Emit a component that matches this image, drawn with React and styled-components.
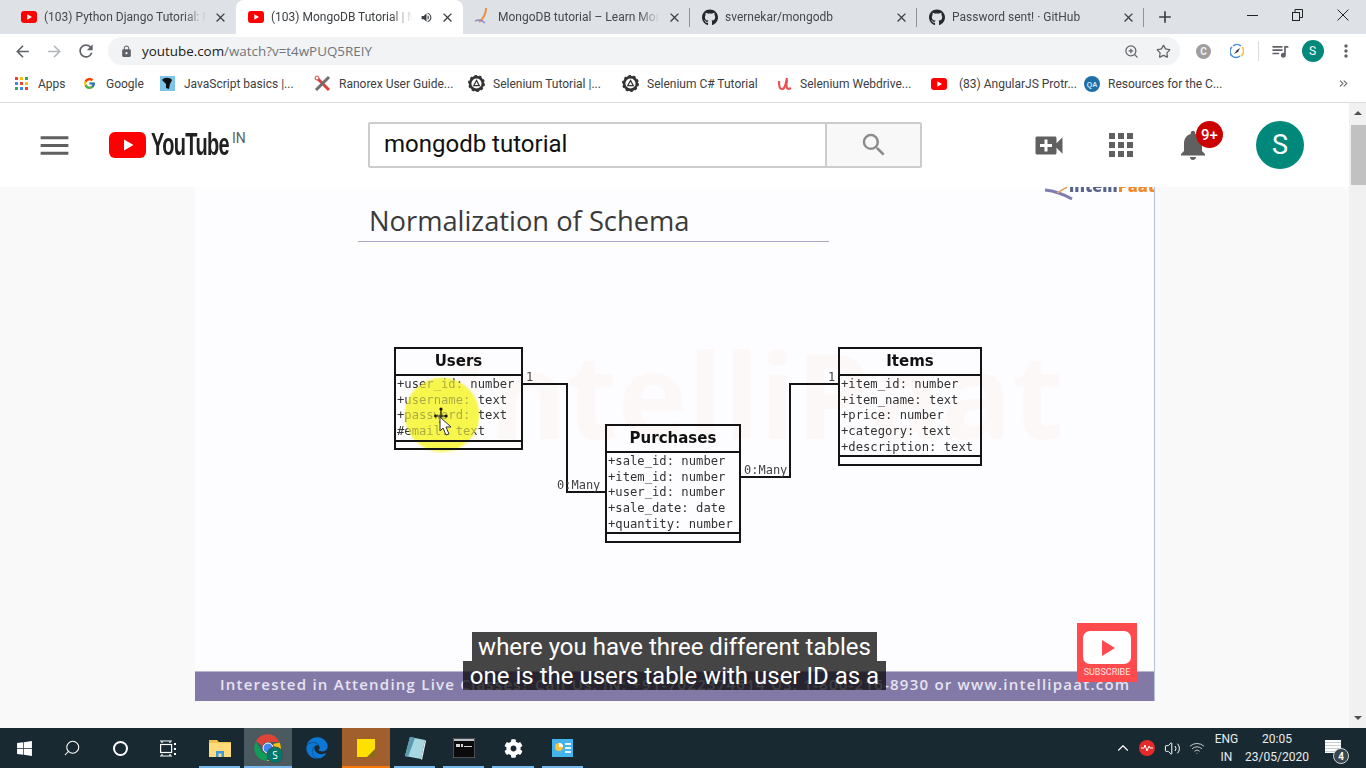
import styled, { createGlobalStyle } from "styled-components";
import { FaGithub, FaWindows, FaCog, FaEdge } from "react-icons/fa";
import { FcGoogle } from "react-icons/fc";
import {
  MdMenu,
  MdVideoCall,
  MdApps,
  MdNotifications,
  MdSearch,
  MdArrowBack,
  MdArrowForward,
  MdRefresh,
  MdLock,
  MdClose,
  MdAdd,
  MdQueueMusic,
  MdMoreVert,
  MdVolumeUp,
} from "react-icons/md";
import { Search, Star, ZoomIn, Volume2, Wifi, ChevronsRight, ChevronUp } from "lucide-react";

const GlobalStyle = createGlobalStyle`
  html, body { margin: 0; padding: 0; overflow: hidden; }
  * { box-sizing: border-box; }
  body { font-family: Roboto, "Open Sans", sans-serif; }
`;

const Screen = styled.div`
  width: 1366px;
  height: 768px;
  display: flex;
  flex-direction: column;
  overflow: hidden;
  background: #fff;
`;

/* ---------- browser chrome ---------- */
const TabStrip = styled.div`
  height: 34px;
  background: #dee1e6;
  display: flex;
  padding-left: 9px;
  flex-shrink: 0;
`;

const Tab = styled.div`
  width: 227px;
  height: 34px;
  display: flex;
  align-items: center;
  padding-left: 12px;
  gap: 7px;
  position: relative;
  border-radius: 8px 8px 0 0;
  background: ${(p) => (p.$active ? "#fff" : "transparent")};
  color: ${(p) => (p.$active ? "#3c4043" : "#45484c")};
  &::after {
    content: "";
    display: ${(p) => (p.$sep ? "block" : "none")};
    position: absolute;
    right: 0;
    top: 8px;
    height: 19px;
    width: 1px;
    background: #8f9296;
  }
`;

const TabIcon = styled.span`
  width: 16px;
  height: 16px;
  display: flex;
  align-items: center;
  justify-content: center;
  flex-shrink: 0;
`;

const TabTitle = styled.span`
  flex: 1;
  min-width: 0;
  font-size: 12px;
  line-height: 16px;
  white-space: nowrap;
  overflow: hidden;
  mask-image: linear-gradient(to right, #000 calc(100% - 22px), transparent);
`;

const TabClose = styled(MdClose)`
  width: 15px;
  height: 15px;
  color: #3c4043;
  margin-right: 8px;
  flex-shrink: 0;
`;

const Speaker = styled(MdVolumeUp)`
  width: 13px;
  height: 13px;
  color: #3c4043;
  flex-shrink: 0;
`;

const NewTab = styled(MdAdd)`
  width: 20px;
  height: 20px;
  color: #3c4043;
  margin: 7px 0 0 11px;
`;

const WindowButtons = styled.div`
  margin-left: auto;
  display: flex;
  align-items: flex-start;
  padding-right: 1px;
`;

const WindowButton = styled.div`
  width: 45px;
  height: 30px;
  display: flex;
  align-items: center;
  justify-content: center;
  color: #222;
`;

const Toolbar = styled.div`
  height: 34px;
  display: flex;
  align-items: center;
  background: #fff;
  padding-left: 12px;
  flex-shrink: 0;
`;

const NavButton = styled.span`
  width: 32px;
  display: flex;
  justify-content: center;
  color: ${(p) => p.$color || "#5f6368"};
  margin-left: ${(p) => (p.$first ? "-6px" : "0")};
`;

const Omnibox = styled.div`
  width: 1072px;
  height: 28px;
  margin-left: 6px;
  border-radius: 14px;
  background: #f1f3f4;
  display: flex;
  align-items: center;
  padding: 0 1px 0 12px;
  color: #5f6368;
`;

const Url = styled.span`
  font-family: "Open Sans", sans-serif;
  font-size: 13.4px;
  margin-left: 9px;
  color: #70757a;
  flex: 1;
  b {
    font-weight: 400;
    color: #202124;
  }
`;

const OmniIcon = styled.span`
  display: flex;
  width: 32px;
  justify-content: center;
  color: #5f6368;
`;

const ExtArea = styled.div`
  flex: 1;
  display: flex;
  align-items: center;
  padding-left: 7px;
`;

const ExtButton = styled.span`
  width: ${(p) => p.$w || 33}px;
  display: flex;
  justify-content: center;
  align-items: center;
  color: #5f6368;
`;

const GreyCircle = styled.span`
  width: 15px;
  height: 15px;
  border-radius: 50%;
  background: #9e9e9e;
  color: #eee;
  font-size: 10px;
  font-weight: 700;
  display: flex;
  align-items: center;
  justify-content: center;
`;

const ToolbarSep = styled.span`
  width: 1px;
  height: 20px;
  background: #dadce0;
  margin: 0 4px 0 5px;
`;

const SmallAvatar = styled.span`
  width: 22px;
  height: 22px;
  border-radius: 50%;
  background: #00897b;
  color: #fff;
  font-size: 12px;
  display: flex;
  align-items: center;
  justify-content: center;
`;

const Bookmarks = styled.div`
  height: 35px;
  display: flex;
  align-items: flex-start;
  padding: 7px 0 0 15px;
  background: #fff;
  border-bottom: 1px solid #dcdcdc;
  flex-shrink: 0;
`;

const Bookmark = styled.div`
  width: ${(p) => p.$w}px;
  display: flex;
  align-items: center;
  gap: ${(p) => p.$gap || 8}px;
  height: 17px;
  font-size: 12px;
  color: #3c4043;
  white-space: nowrap;
  flex-shrink: 0;
`;

const BookmarkMore = styled(ChevronsRight)`
  width: 13px;
  height: 13px;
  color: #6b6f73;
  margin: 2px 16px 0 auto;
`;

/* ---------- page ---------- */
const Viewport = styled.div`
  flex: 1;
  display: flex;
  min-height: 0;
`;

const Page = styled.div`
  flex: 1;
  display: flex;
  flex-direction: column;
  background: #f9f9f9;
`;

const Masthead = styled.header`
  height: 84px;
  background: #fff;
  display: flex;
  align-items: center;
  padding: 0 45px 0 36px;
  position: relative;
  z-index: 5;
  flex-shrink: 0;
`;

const LogoGroup = styled.div`
  width: 332px;
  display: flex;
  align-items: center;
`;

const MenuIcon = styled(MdMenu)`
  width: 37px;
  height: 37px;
  color: #606060;
  margin-right: 36px;
`;

const Wordmark = styled.span`
  display: inline-block;
  width: 77px;
  margin-left: 5px;
  font-family: "Liberation Sans", sans-serif;
  font-weight: 700;
  font-size: 31px;
  letter-spacing: -1px;
  color: #212121;
  transform: scaleX(0.645);
  transform-origin: left center;
  white-space: nowrap;
`;

const Region = styled.span`
  font-size: 14px;
  color: #606060;
  margin: -14px 0 0 4px;
  line-height: 1;
`;

const SearchBox = styled.div`
  width: 554px;
  height: 46px;
  display: flex;
  border: 2px solid #ccc;
  border-radius: 2px;
`;

const SearchInput = styled.div`
  flex: 1;
  padding-left: 14px;
  font-size: 24px;
  line-height: 41px;
  color: #111;
  background: #fff;
`;

const SearchButton = styled.div`
  width: 95px;
  background: #f8f8f8;
  border-left: 2px solid #ccc;
  display: flex;
  align-items: center;
  justify-content: center;
  color: #8c8c8c;
`;

const Actions = styled.div`
  margin-left: auto;
  display: flex;
  align-items: center;
`;

const ActionIcon = styled.span`
  width: 36px;
  height: 36px;
  margin-right: 36px;
  display: flex;
  align-items: center;
  justify-content: center;
  color: #606060;
  position: relative;
  &:nth-child(3) {
    margin-right: 45px;
  }
`;

const Badge = styled.span`
  position: absolute;
  left: 21px;
  top: -6px;
  width: 27px;
  height: 27px;
  border-radius: 50%;
  background: #cc0000;
  color: #fff;
  font-size: 15px;
  font-weight: 500;
  display: flex;
  align-items: center;
  justify-content: center;
`;

const Avatar = styled.span`
  width: 48px;
  height: 48px;
  border-radius: 50%;
  background: #00897b;
  color: #fff;
  font-size: 27px;
  display: flex;
  align-items: center;
  justify-content: center;
`;

const Main = styled.main`
  flex: 1;
  padding-left: 195px;
`;

const Video = styled.div`
  width: 960px;
  height: 514px;
  position: relative;
  overflow: hidden;
  background: #fdfcfe;
  border-right: 1px solid #b9bedb;
`;

const VendorLogo = styled.div`
  position: absolute;
  left: 874px;
  top: -11px;
  font-family: "Open Sans", sans-serif;
  font-size: 16px;
  line-height: 20px;
  font-weight: 800;
  color: #5a6488;
  filter: blur(0.5px);
  white-space: nowrap;
  span {
    color: #f08a2c;
  }
`;

const Swoosh = styled.svg`
  position: absolute;
  left: 850px;
  top: 0;
  filter: blur(0.6px);
`;

const Watermark = styled.div`
  position: absolute;
  left: 255px;
  top: 142px;
  font-family: "Open Sans", sans-serif;
  font-size: 118px;
  line-height: 130px;
  font-weight: 700;
  color: #f3a15e;
  opacity: 0.03;
  white-space: nowrap;
`;

const SlideTitle = styled.h1`
  position: absolute;
  left: 174px;
  top: 14px;
  margin: 0;
  font-family: "Open Sans", sans-serif;
  font-size: 27.3px;
  line-height: 40px;
  font-weight: 400;
  color: #3a3a3a;
  white-space: nowrap;
`;

const TitleRule = styled.div`
  position: absolute;
  left: 163px;
  top: 54px;
  width: 471px;
  height: 1px;
  background: #aba6cb;
`;

const Wires = styled.svg`
  position: absolute;
  left: 0;
  top: 0;
  filter: blur(0.3px);
`;

const Highlight = styled.div`
  position: absolute;
  left: 210px;
  top: 191px;
  width: 74px;
  height: 74px;
  border-radius: 50%;
  background: #f7f64e;
  filter: blur(1px);
`;

const UmlBox = styled.div`
  position: absolute;
  left: ${(p) => p.$x}px;
  top: ${(p) => p.$y}px;
  width: ${(p) => p.$w}px;
  border: 2px solid #141414;
  filter: blur(0.35px);
`;

const UmlTitle = styled.div`
  height: 25px;
  font-family: "DejaVu Sans", sans-serif;
  font-weight: 700;
  font-size: 15px;
  line-height: 24px;
  text-align: center;
  color: #111;
`;

const UmlBody = styled.div`
  border-top: 2px solid #141414;
  border-bottom: 2px solid #141414;
  padding: 1px 0 0 1px;
  position: relative;
  overflow: hidden;
`;

const UmlRow = styled.div`
  font-family: "DejaVu Sans Mono", monospace;
  font-size: 12.2px;
  line-height: 15.7px;
  height: 15.7px;
  color: #333;
  white-space: nowrap;
`;

const UmlFoot = styled.div`
  height: 6.5px;
`;

const Wash = styled.div`
  position: absolute;
  left: 9px;
  top: 2px;
  width: 74px;
  height: 74px;
  border-radius: 50%;
  background: rgba(247, 246, 78, 0.62);
`;

const WireLabel = styled.span`
  position: absolute;
  left: ${(p) => p.$x}px;
  top: ${(p) => p.$y}px;
  font-family: "DejaVu Sans Mono", monospace;
  font-size: 12px;
  line-height: 14px;
  color: #444;
  filter: blur(0.3px);
`;

const Pointer = styled.svg`
  position: absolute;
  left: 239px;
  top: 220px;
`;

const PurpleBar = styled.div`
  position: absolute;
  left: 0;
  bottom: 0;
  width: 100%;
  height: 30px;
  background: #8279a7;
  border-top: 1px solid #b9b5d2;
  padding-left: 25px;
  font-family: "Open Sans", sans-serif;
  font-weight: 600;
  font-size: 15px;
  line-height: 25px;
  letter-spacing: 1.23px;
  color: #e6e4f0;
  white-space: nowrap;
`;

const Captions = styled.div`
  position: absolute;
  left: 0;
  top: 445px;
  width: 100%;
  display: flex;
  flex-direction: column;
  align-items: center;
`;

const CaptionLine = styled.div`
  height: 29px;
  padding: 1px 6.5px 0;
  background: rgba(8, 8, 8, 0.75);
  color: #fff;
  font-size: 24px;
  line-height: 29px;
  white-space: nowrap;
`;

const SubscribeBadge = styled.div`
  position: absolute;
  left: 882px;
  top: 436px;
  width: 60px;
  height: 59px;
  background: #ff4a4e;
  padding-top: 8px;
  display: flex;
  flex-direction: column;
  align-items: center;
  color: #ffe3e3;
  font-size: 9px;
  line-height: 11px;
`;

const SubscribeIcon = styled.div`
  width: 48px;
  height: 33px;
  border-radius: 7px;
  background: #fff;
  margin-bottom: 3px;
  display: flex;
  align-items: center;
  justify-content: center;
  &::before {
    content: "";
    border-left: 13px solid #ff4a4e;
    border-top: 8px solid transparent;
    border-bottom: 8px solid transparent;
    margin-left: 3px;
  }
`;

const Scrollbar = styled.div`
  width: 17px;
  background: #f1f1f1;
  display: flex;
  flex-direction: column;
  align-items: center;
  position: relative;
  z-index: 6;
`;

const ScrollArrow = styled.span`
  height: 20px;
  display: flex;
  align-items: center;
  justify-content: center;
  margin-top: ${(p) => (p.$down ? "auto" : "0")};
  &::before {
    content: "";
    border-left: 4px solid transparent;
    border-right: 4px solid transparent;
    border-${(p) => (p.$down ? "top" : "bottom")}: 4px solid #505050;
  }
`;

const ScrollThumb = styled.div`
  width: 15px;
  height: 60px;
  margin-top: 2px;
  margin-left: 1px;
  background: #c1c1c1;
`;

/* ---------- taskbar ---------- */
const Taskbar = styled.footer`
  height: 40px;
  background: #192931;
  display: flex;
  color: #fff;
  flex-shrink: 0;
`;

const TaskSlot = styled.div`
  width: ${(p) => p.$w || 48}px;
  height: 40px;
  display: flex;
  align-items: center;
  justify-content: center;
  position: relative;
  background: ${(p) => p.$bg || "transparent"};
  &::after {
    content: "";
    display: ${(p) => (p.$line ? "block" : "none")};
    position: absolute;
    left: ${(p) => (p.$bg ? 0 : 4)}px;
    right: ${(p) => (p.$bg ? 0 : 4)}px;
    bottom: 0;
    height: 2px;
    background: ${(p) => p.$line};
  }
`;

const TaskGap = styled.div`
  width: 3px;
`;

const SearchGlyph = styled(Search)`
  width: 18px;
  height: 18px;
  stroke-width: 1.4;
  transform: scaleX(-1);
`;

const CortanaRing = styled.span`
  width: 15px;
  height: 15px;
  border: 2.5px solid #fff;
  border-radius: 50%;
`;

const Tray = styled.div`
  margin-left: auto;
  display: flex;
  padding-right: 10px;
`;

const TrayText = styled.div`
  width: ${(p) => p.$w}px;
  height: 40px;
  display: flex;
  flex-direction: column;
  align-items: center;
  justify-content: center;
  font-size: 12px;
  line-height: 18px;
  color: #e8ecee;
`;

const Pulse = styled.span`
  width: 16px;
  height: 16px;
  border-radius: 50%;
  background: #e52a2a;
  display: flex;
  align-items: center;
  justify-content: center;
`;

const NoteBubble = styled.div`
  width: 16px;
  height: 13px;
  margin-top: -3px;
  background: repeating-linear-gradient(#fff 0 2px, #c9ced1 2px 3px);
  position: relative;
`;

const NoteCount = styled.span`
  position: absolute;
  left: 8px;
  top: 8px;
  width: 16px;
  height: 16px;
  border-radius: 50%;
  background: #3a474e;
  border: 1.5px solid #d0d4d6;
  color: #fff;
  font-size: 10px;
  font-weight: 700;
  display: flex;
  align-items: center;
  justify-content: center;
`;

const YtFavicon = () => (
  <svg width="16" height="12" viewBox="0 0 16 12">
    <rect width="16" height="12" rx="3" fill="#f00" />
    <path d="M6.3 3.2v5.6L11 6z" fill="#fff" />
  </svg>
);

const Feather = () => (
  <svg width="16" height="18" viewBox="0 0 16 18" fill="none">
    <path d="M11 0 C11 6 8 11 4 14" stroke="#ef8f3b" strokeWidth="2" />
    <path d="M0 13 C4 11 7 12 10 15" stroke="#8f86c8" strokeWidth="1.4" />
  </svg>
);

const RanorexIcon = () => (
  <svg width="17" height="17" viewBox="0 0 17 17" fill="none">
    <path d="M2 2l13 13" stroke="#d8433c" strokeWidth="3" />
    <path d="M15 2L2 15" stroke="#6f6f6f" strokeWidth="3" />
    <circle cx="3" cy="3" r="2" fill="#fff" stroke="#d8433c" />
  </svg>
);

const JsIcon = () => (
  <svg width="15" height="15" viewBox="0 0 15 15">
    <rect width="15" height="15" fill="#7cc5ea" />
    <path d="M2 4c2-3 8-3 10 0l-2 4-1 5-3-1V8z" fill="#111" />
  </svg>
);

const SeleniumIcon = () => (
  <svg width="17" height="17" viewBox="0 0 17 17">
    <circle cx="8.5" cy="8.5" r="6.4" fill="none" stroke="#333" strokeWidth="2.6" />
    <circle cx="8.5" cy="8.5" r="7.6" fill="none" stroke="#333" strokeWidth="1.8" strokeDasharray="2.4 2.4" />
    <path d="M8.5 5.4l2.8 5.2H5.7z" fill="none" stroke="#333" strokeWidth="1.2" />
  </svg>
);

const UdemyIcon = () => (
  <svg width="15" height="15" viewBox="0 0 15 15" fill="none" stroke="#ea5252" strokeWidth="2.2">
    <path d="M2 5c0 7 1 8 3 8 3 0 4-6 5-11" />
    <path d="M10 4c-1 5-1 9 2 9l2-1" />
  </svg>
);

const QaIcon = () => (
  <svg width="16" height="16" viewBox="0 0 16 16">
    <circle cx="8" cy="8" r="8" fill="#1d6fa5" />
    <text x="8" y="10.5" fontSize="7" fontFamily="Liberation Sans" fontWeight="700" fill="#cfe8f7" textAnchor="middle">
      QA
    </text>
  </svg>
);

const CompassIcon = () => (
  <svg width="14" height="16" viewBox="0 0 14 16" fill="none">
    <path d="M3 3a6 6 0 0 1 8 0" stroke="#4a90e2" strokeWidth="1.6" />
    <path d="M12 4a6 6 0 0 1-1 9" stroke="#f4c430" strokeWidth="1.6" />
    <path d="M10 13a6 6 0 0 1-8-9" stroke="#4a90e2" strokeWidth="1.6" />
    <path d="M4 11l3-4 3-2-2 4z" fill="#30343a" />
  </svg>
);

const ChromeIcon = () => (
  <svg width="30" height="30" viewBox="0 0 30 30">
    <path d="M3 8a13 13 0 0 1 23.3 1H15a6 6 0 0 0-5.6 4z" fill="#db4437" />
    <path d="M26.6 9.5A13 13 0 0 1 14 28l5.5-9a6 6 0 0 0 .6-8z" fill="#f4c20d" />
    <path d="M13.5 28A13 13 0 0 1 3 8.5l5.6 9.5a6 6 0 0 0 6 2.8z" fill="#0f9d58" />
    <circle cx="15" cy="15" r="5" fill="#4285f4" stroke="#fff" strokeWidth="1" />
    <circle cx="22" cy="22" r="8" fill="#00796b" stroke="#3d5157" strokeWidth="1" />
    <text x="22" y="26" fontSize="10" fontFamily="Open Sans" fill="#fff" textAnchor="middle">
      S
    </text>
  </svg>
);

const FolderIcon = () => (
  <svg width="22" height="18" viewBox="0 0 22 18">
    <path d="M0 1h8l2 2h12v15H0z" fill="#f4c04e" />
    <path d="M0 4h22v14H0z" fill="#ffdb7a" />
    <path d="M7 18v-6h8v6h-2.5v-3.500h-3V18z" fill="#3d9ae0" />
  </svg>
);

const StickyIcon = () => (
  <svg width="18" height="18" viewBox="0 0 18 18">
    <path d="M0 0h18v11l-7 7H0z" fill="#ffe100" />
    <path d="M18 10v8H10z" fill="#8a6a18" />
  </svg>
);

const NotepadIcon = () => (
  <svg width="22" height="24" viewBox="0 0 22 24">
    <path d="M6 1l15 3-4 19-16-3z" fill="#a7d7e3" />
    <path d="M6 1l5 1-7 19-3-1z" fill="#5c9bad" />
    <path d="M17 23l4-19 1 1-4 19z" fill="#eef7f9" />
  </svg>
);

const CmdIcon = () => (
  <svg width="22" height="20" viewBox="0 0 22 20">
    <rect width="22" height="20" fill="#0b0b0b" stroke="#8a8f92" />
    <rect x="1" y="1" width="20" height="2" fill="#b9bfc2" />
    <path d="M3 6h4v3H3zM8 6h2v3H8zM11 8h8v1h-8z" fill="#d4d4d4" />
  </svg>
);

const ControlIcon = () => (
  <svg width="21" height="18" viewBox="0 0 21 18">
    <rect width="21" height="18" fill="#45b3ec" />
    <circle cx="7" cy="8" r="4" fill="#f6c344" />
    <path d="M7 8V4a4 4 0 0 1 4 4z" fill="#fff" />
    <path d="M13 4h6v2h-6zM13 8h6v2h-6zM13 12h6v2h-6z" fill="#e4f4fc" />
  </svg>
);

const TaskViewIcon = () => (
  <svg width="16" height="17" viewBox="0 0 16 17" fill="none" stroke="#fff" strokeWidth="1.2">
    <path d="M0 1h12M2 1v2M10 1v2M0 16h12M2 14v2M10 14v2" />
    <rect x="0.600" y="4.500" width="11" height="8" />
    <path d="M15 3v2M15 8v2M15 13v2" strokeWidth="2" />
  </svg>
);

const MoveCursor = () => (
  <Pointer width="24" height="34" viewBox="0 0 24 34">
    <path d="M7 9v-7M7 9v6M3 9h8" stroke="#111" strokeWidth="1.2" />
    <circle cx="7" cy="2" r="1.6" fill="#111" />
    <circle cx="7" cy="15" r="1.6" fill="#111" />
    <circle cx="1.500" cy="9" r="1.4" fill="#111" />
    <circle cx="12" cy="9" r="1.6" fill="#111" />
    <path d="M6 10l0 14 3-3 3 7 3-1-3-7h5z" fill="#fff" stroke="#333" strokeWidth="1" />
  </Pointer>
);

function AppsColored() {
  const colors = ["#ea4335", "#fbbc05", "#34a853", "#4285f4", "#ea4335", "#fbbc05", "#34a853", "#4285f4", "#ea4335"];
  return (
    <svg width="13" height="13" viewBox="0 0 13 13">
      {colors.map((c, i) => (
        <rect key={i} x={(i % 3) * 5} y={Math.floor(i / 3) * 5} width="3" height="3" fill={c} />
      ))}
    </svg>
  );
}

const tabs = [
  { icon: <YtFavicon />, title: "(103) Python Django Tutorial: Full Course" },
  { icon: <YtFavicon />, title: "(103) MongoDB Tutorial | MongoDB", active: true, sound: true },
  { icon: <Feather />, title: "MongoDB tutorial – Learn MongoDB", sep: true },
  { icon: <FaGithub size={17} color="#24292e" />, title: "svernekar/mongodb", sep: true },
  { icon: <FaGithub size={17} color="#24292e" />, title: "Password sent! · GitHub", sep: true },
];

const bookmarks = [
  { w: 68, gap: 10, icon: <AppsColored />, label: "Apps" },
  { w: 77, gap: 10, icon: <FcGoogle size={13} />, label: "Google" },
  { w: 154, gap: 9, icon: <JsIcon />, label: "JavaScript basics |..." },
  { w: 154, icon: <RanorexIcon />, label: "Ranorex User Guide..." },
  { w: 154, icon: <SeleniumIcon />, label: "Selenium Tutorial |..." },
  { w: 155, icon: <SeleniumIcon />, label: "Selenium C# Tutorial" },
  { w: 154, icon: <UdemyIcon />, label: "Selenium Webdrive..." },
  { w: 153, gap: 12, icon: <YtFavicon />, label: "(83) AngularJS Protr..." },
  { w: 200, icon: <QaIcon />, label: "Resources for the C..." },
];

const users = ["+user_id: number", "+username: text", "+password: text", "#email: text"];
const purchases = ["+sale_id: number", "+item_id: number", "+user_id: number", "+sale_date: date", "+quantity: number"];
const items = ["+item_id: number", "+item_name: text", "+price: number", "+category: text", "+description: text"];

function Uml({ x, y, w, title, rows, wash }) {
  return (
    <UmlBox $x={x} $y={y} $w={w}>
      <UmlTitle>{title}</UmlTitle>
      <UmlBody>
        {rows.map((r) => (
          <UmlRow key={r}>{r}</UmlRow>
        ))}
        {wash && <Wash />}
      </UmlBody>
      <UmlFoot />
    </UmlBox>
  );
}

export default function App() {
  return (
    <Screen>
      <GlobalStyle />
      <TabStrip>
        {tabs.map((t) => (
          <Tab key={t.title} $active={t.active} $sep={t.sep}>
            <TabIcon>{t.icon}</TabIcon>
            <TabTitle>{t.title}</TabTitle>
            {t.sound && <Speaker />}
            <TabClose />
          </Tab>
        ))}
        <NewTab />
        <WindowButtons>
          <WindowButton>
            <svg width="11" height="11" viewBox="0 0 11 11">
              <path d="M0 5.500h11" stroke="#222" />
            </svg>
          </WindowButton>
          <WindowButton>
            <svg width="11" height="12" viewBox="0 0 11 12" fill="none" stroke="#222">
              <rect x="0.500" y="3.500" width="7" height="8" />
              <path d="M3 3V0.500h7.500v8H8" />
            </svg>
          </WindowButton>
          <WindowButton>
            <svg width="12" height="12" viewBox="0 0 12 12">
              <path d="M0.500 0.500l11 11M11.500 0.500l-11 11" stroke="#222" />
            </svg>
          </WindowButton>
        </WindowButtons>
      </TabStrip>

      <Toolbar>
        <NavButton $first>
          <MdArrowBack size={19} />
        </NavButton>
        <NavButton $color="#b4b7ba">
          <MdArrowForward size={19} />
        </NavButton>
        <NavButton>
          <MdRefresh size={20} />
        </NavButton>
        <Omnibox>
          <MdLock size={13} />
          <Url>
            <b>youtube.com</b>/watch?v=t4wPUQ5REIY
          </Url>
          <OmniIcon>
            <ZoomIn size={15} />
          </OmniIcon>
          <OmniIcon>
            <Star size={15} />
          </OmniIcon>
        </Omnibox>
        <ExtArea>
          <ExtButton>
            <GreyCircle>C</GreyCircle>
          </ExtButton>
          <ExtButton>
            <CompassIcon />
          </ExtButton>
          <ToolbarSep />
          <ExtButton>
            <MdQueueMusic size={20} />
          </ExtButton>
          <ExtButton>
            <SmallAvatar>S</SmallAvatar>
          </ExtButton>
          <ExtButton>
            <MdMoreVert size={20} />
          </ExtButton>
        </ExtArea>
      </Toolbar>

      <Bookmarks>
        {bookmarks.map((b) => (
          <Bookmark key={b.label} $w={b.w} $gap={b.gap}>
            {b.icon}
            {b.label}
          </Bookmark>
        ))}
        <BookmarkMore />
      </Bookmarks>

      <Viewport>
        <Page>
          <Masthead>
            <LogoGroup>
              <MenuIcon />
              <svg width="37" height="26" viewBox="0 0 37 26">
                <rect width="37" height="26" rx="6" fill="#f00" />
                <path d="M15 7.500v11L24.500 13z" fill="#fff" />
              </svg>
              <Wordmark>YouTube</Wordmark>
              <Region>IN</Region>
            </LogoGroup>
            <SearchBox>
              <SearchInput>mongodb tutorial</SearchInput>
              <SearchButton>
                <MdSearch size={30} />
              </SearchButton>
            </SearchBox>
            <Actions>
              <ActionIcon>
                <MdVideoCall size={37} />
              </ActionIcon>
              <ActionIcon>
                <MdApps size={36} />
              </ActionIcon>
              <ActionIcon>
                <MdNotifications size={36} />
                <Badge>9+</Badge>
              </ActionIcon>
              <Avatar>S</Avatar>
            </Actions>
          </Masthead>

          <Main>
            <Video>
              <Watermark>IntelliPaat</Watermark>
              <Swoosh width="30" height="16" viewBox="0 0 30 16">
                <path d="M0 3C10 4 20 8 27 12" stroke="#7f7db0" strokeWidth="3" fill="none" />
                <path d="M12 6L22 0" stroke="#e8a060" strokeWidth="1.500" />
              </Swoosh>
              <VendorLogo>
                intelli<span>Paat</span>
              </VendorLogo>
              <SlideTitle>Normalization of Schema</SlideTitle>
              <TitleRule />

              <Highlight />
              <Wires width="960" height="514" viewBox="0 0 960 514" fill="none" stroke="#141414" strokeWidth="2">
                <path d="M328 197H372V305H410" />
                <path d="M546 290H595V197H643" />
              </Wires>
              <WireLabel $x={331} $y={183}>1</WireLabel>
              <WireLabel $x={362} $y={291}>0:Many</WireLabel>
              <WireLabel $x={549} $y={276}>0:Many</WireLabel>
              <WireLabel $x={633} $y={183}>1</WireLabel>

              <Uml x={199} y={160} w={129} title="Users" rows={users} wash />
              <Uml x={410} y={237} w={136} title="Purchases" rows={purchases} />
              <Uml x={643} y={160} w={144} title="Items" rows={items} />
              <MoveCursor />

              <PurpleBar>
                Interested in Attending Live Classes? Call Us: IN: +91-7022374614 US: 1-800-216-8930 or www.intellipaat.com
              </PurpleBar>
              <Captions>
                <CaptionLine>where you have three different tables</CaptionLine>
                <CaptionLine>one is the users table with user ID as a</CaptionLine>
              </Captions>
              <SubscribeBadge>
                <SubscribeIcon />
                SUBSCRIBE
              </SubscribeBadge>
            </Video>
          </Main>
        </Page>
        <Scrollbar>
          <ScrollArrow />
          <ScrollThumb />
          <ScrollArrow $down />
        </Scrollbar>
      </Viewport>

      <Taskbar>
        <TaskSlot>
          <FaWindows size={17} />
        </TaskSlot>
        <TaskSlot>
          <SearchGlyph />
        </TaskSlot>
        <TaskSlot>
          <CortanaRing />
        </TaskSlot>
        <TaskSlot>
          <TaskViewIcon />
        </TaskSlot>
        <TaskGap />
        <TaskSlot $w={49} $line="#76b9ed">
          <FolderIcon />
        </TaskSlot>
        <TaskSlot $w={48} $bg="#4a5a5f" $line="#76b9ed">
          <ChromeIcon />
        </TaskSlot>
        <TaskSlot $w={50}>
          <FaEdge size={22} color="#0c78d6" />
        </TaskSlot>
        <TaskSlot $w={48} $bg="#a05f2c" $line="#f7780d">
          <StickyIcon />
        </TaskSlot>
        <TaskSlot $w={49} $line="#76b9ed">
          <NotepadIcon />
        </TaskSlot>
        <TaskSlot $w={49} $line="#76b9ed">
          <CmdIcon />
        </TaskSlot>
        <TaskSlot $w={50} $line="#76b9ed">
          <FaCog size={19} />
        </TaskSlot>
        <TaskSlot $w={49} $line="#76b9ed">
          <ControlIcon />
        </TaskSlot>

        <Tray>
          <TaskSlot $w={24}>
            <ChevronUp size={18} strokeWidth={1.5} />
          </TaskSlot>
          <TaskSlot $w={24}>
            <Pulse>
              <svg width="12" height="8" viewBox="0 0 12 8" fill="none" stroke="#fff">
                <path d="M0 4h3l1-3 2 6 2-5 1 2h3" />
              </svg>
            </Pulse>
          </TaskSlot>
          <TaskSlot $w={26}>
            <Volume2 size={17} strokeWidth={1.4} />
          </TaskSlot>
          <TaskSlot $w={24}>
            <Wifi size={16} strokeWidth={1.4} color="#cfd4d6" />
          </TaskSlot>
          <TrayText $w={35}>
            <span>ENG</span>
            <span>IN</span>
          </TrayText>
          <TrayText $w={66}>
            <span>20:05</span>
            <span>23/05/2020</span>
          </TrayText>
          <TaskSlot $w={46}>
            <NoteBubble>
              <NoteCount>4</NoteCount>
            </NoteBubble>
          </TaskSlot>
        </Tray>
      </Taskbar>
    </Screen>
  );
}
